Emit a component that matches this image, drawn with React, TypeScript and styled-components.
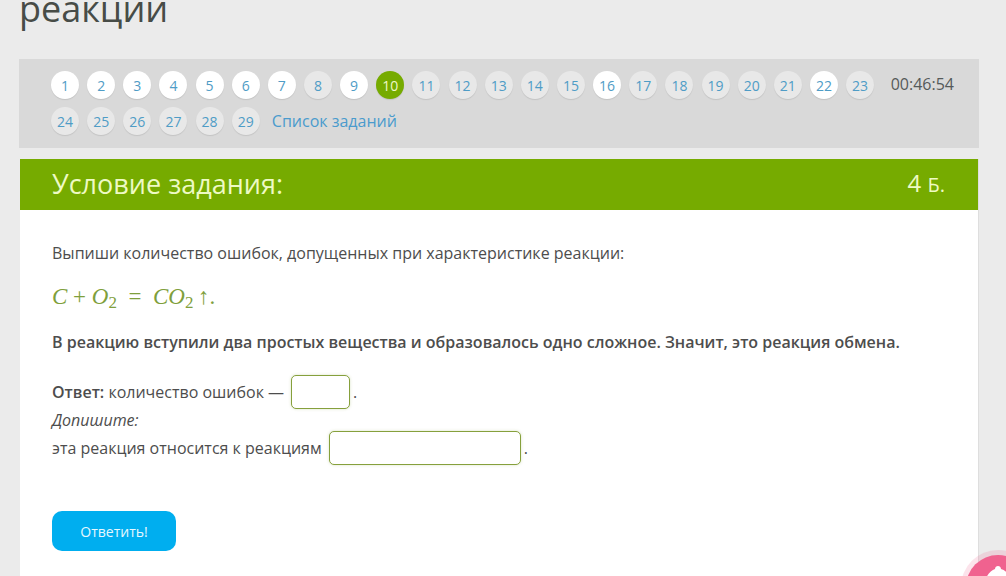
import { FC } from 'react';
import styled, { createGlobalStyle } from 'styled-components';

const GlobalStyle = createGlobalStyle`
	html, body {
		margin: 0;
		padding: 0;
		height: 576px;
		overflow: hidden;
		background: #ebebeb;
		font-family: "Open Sans", "Noto Sans", sans-serif;
		color: #4d4d4d;
	}
	* {
		box-sizing: border-box;
	}
`;

const Page = styled.div`
	position: relative;
	width: 1006px;
	height: 576px;
	overflow: hidden;
	padding: 0 27px 0 19px;
`;

const PageTitle = styled.h1`
	margin: -16px 0 0;
	height: 75px;
	font-size: 36px;
	line-height: 50px;
	font-weight: 400;
	color: #474c47;
`;

const TasksPanel = styled.nav`
	display: flex;
	justify-content: space-between;
	align-items: flex-start;
	height: 89px;
	width: 960px;
	padding: 12px 25px 0 32px;
	background: #d9d9d9;
`;

const TasksList = styled.div`
	display: flex;
	flex-wrap: wrap;
	align-items: center;
	column-gap: 8.15px;
	row-gap: 8px;
	width: 832px;
`;

const TaskCircle = styled.a<{ $state: 'done' | 'idle' | 'current' }>`
	display: flex;
	align-items: center;
	justify-content: center;
	width: 28px;
	height: 28px;
	border-radius: 50%;
	font-size: 14px;
	background: ${({ $state }) =>
		$state === 'current' ? '#76ab00' : $state === 'done' ? '#ffffff' : '#e8e8e8'};
	color: ${({ $state }) => ($state === 'current' ? '#eef8c8' : '#4f9cc6')};
	box-shadow: 0 1px 1px rgba(0, 0, 0, 0.1);
`;

const TasksLink = styled.a`
	margin-left: 4px;
	font-size: 16px;
	color: #4a9bcd;
`;

const Timer = styled.div`
	font-size: 16px;
	line-height: 26px;
	color: #555a5a;
`;

const Card = styled.section`
	display: flex;
	flex-direction: column;
	width: 959px;
	height: 420px;
	margin: 11px 0 0 1px;
	background: #ffffff;
	border-right: 1px solid #dedede;
`;

const CardHeader = styled.header`
	display: flex;
	justify-content: space-between;
	align-items: center;
	height: 51px;
	padding: 0 33px 2px 32px;
	background: #76ab00;
	color: #eefac4;
`;

const CardTitle = styled.h2`
	margin: 0;
	font-size: 27px;
	line-height: 36px;
	font-weight: 400;
`;

const Points = styled.div`
	font-size: 24px;
	line-height: 36px;

	small {
		font-size: 20px;
	}
`;

const CardBody = styled.div`
	display: flex;
	flex-direction: column;
	padding: 32px 32px 0;
	font-size: 16px;
	line-height: 22px;
`;

const Paragraph = styled.p`
	margin: 0;
`;

const Formula = styled.p`
	margin: 21px 0 0;
	font-family: "Liberation Serif", serif;
	font-size: 23px;
	line-height: 24px;
	color: #7f9f3c;
	white-space: pre;

	i {
		font-style: italic;
	}

	sub {
		font-size: 17px;
		line-height: 0;
		vertical-align: -4px;
	}
`;

const Statement = styled.p`
	margin: 22px 0 0;
	font-weight: 600;
`;

const AnswerRow = styled.div`
	display: flex;
	align-items: center;
	height: 34px;
	gap: 3px;

	b {
		font-weight: 600;
	}
`;

const FirstAnswerRow = styled(AnswerRow)`
	margin-top: 22px;
`;

const Hint = styled.em`
	display: block;
	height: 22px;
	line-height: 22px;
	font-style: italic;
`;

const AnswerInput = styled.input<{ $width: number }>`
	width: ${({ $width }) => $width}px;
	height: 34px;
	margin-left: 4px;
	border: 1px solid #86a03c;
	border-radius: 5px;
	background: #ffffff;
	box-shadow: 0 0 3px rgba(130, 160, 60, 0.3);
`;

const SubmitButton = styled.button`
	width: 124px;
	height: 40px;
	margin-top: 46px;
	border: none;
	border-radius: 10px;
	background: #00aeef;
	color: #e6f8ff;
	font-family: "Open Sans", sans-serif;
	font-size: 14px;
`;

const HelperBadge = styled.div`
	position: absolute;
	left: 966px;
	top: 555px;
	width: 64px;
	height: 64px;
	border-radius: 50%;
	background: #f0628f;
	box-shadow: 0 0 0 5px rgba(240, 98, 143, 0.18);
`;

const HelperGlyph = styled.svg`
	display: block;
	margin: 8px 0 0 16px;
`;

const doneTasks = [1, 2, 3, 4, 5, 6, 7, 9, 16, 22];
const tasks = Array.from({ length: 29 }, (_, i) => i + 1);

const App: FC = () => {
	const taskCircles = tasks.map((task) => (
		<TaskCircle
			key={task}
			$state={task === 10 ? 'current' : doneTasks.includes(task) ? 'done' : 'idle'}
		>
			{task}
		</TaskCircle>
	));

	return (
		<Page>
			<GlobalStyle />
			<PageTitle>реакции</PageTitle>
			<TasksPanel>
				<TasksList>
					{taskCircles}
					<TasksLink>Список заданий</TasksLink>
				</TasksList>
				<Timer>00:46:54</Timer>
			</TasksPanel>
			<Card>
				<CardHeader>
					<CardTitle>Условие задания:</CardTitle>
					<Points>
						4 <small>Б.</small>
					</Points>
				</CardHeader>
				<CardBody>
					<Paragraph>Выпиши количество ошибок, допущенных при характеристике реакции:</Paragraph>
					<Formula>
						<i>C</i>{' + '}<i>O</i><sub>2</sub>{'  =  '}<i>CO</i><sub>2</sub>{'\u2009↑.'}
					</Formula>
					<Statement>
						В реакцию вступили два простых вещества и образовалось одно сложное. Значит, это реакция обмена.
					</Statement>
					<FirstAnswerRow>
						<span>
							<b>Ответ:</b> количество ошибок —
						</span>
						<AnswerInput $width={59} />
						<span>.</span>
					</FirstAnswerRow>
					<Hint>Допишите:</Hint>
					<AnswerRow>
						<span>эта реакция относится к реакциям</span>
						<AnswerInput $width={192} />
						<span>.</span>
					</AnswerRow>
					<div>
						<SubmitButton>Ответить!</SubmitButton>
					</div>
				</CardBody>
			</Card>
			<HelperBadge>
				<HelperGlyph width="32" height="24" viewBox="0 0 32 24">
					<path d="M13 6 C13 2 19 2 19 6 C25 8 29 12 30 24 L2 24 C3 13 8 8 13 6 Z" fill="#ffffff" />
				</HelperGlyph>
			</HelperBadge>
		</Page>
	);
};

export default App;
